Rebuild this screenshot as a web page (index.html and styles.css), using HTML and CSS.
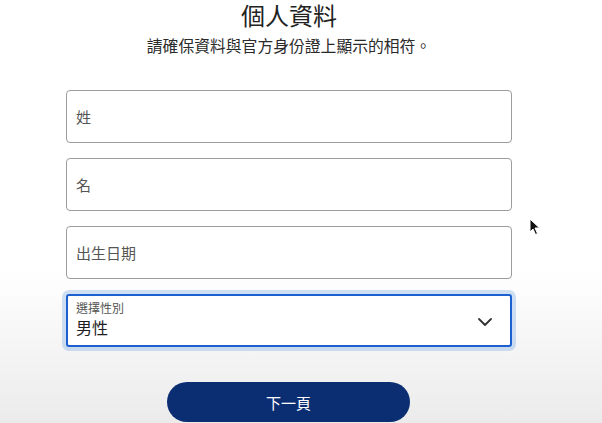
FILE: index.html
```html
<!DOCTYPE html>
<html lang="zh-Hant">
<head>
<meta charset="utf-8">
<title>個人資料</title>
<link rel="stylesheet" href="styles.css">
</head>
<body>
<main class="page">
  <h1 class="title">個人資料</h1>
  <p class="subtitle">請確保資料與官方身份證上顯示的相符。</p>
  <form class="form">
    <div class="field"><span class="placeholder">姓</span></div>
    <div class="field"><span class="placeholder">名</span></div>
    <div class="field"><span class="placeholder">出生日期</span></div>
    <div class="select">
      <div class="select-text">
        <span class="select-label">選擇性別</span>
        <span class="select-value">男性</span>
      </div>
      <svg class="chevron" width="14" height="8" viewBox="0 0 14 8"><path d="M1 1 L7 7 L13 1" fill="none" stroke="#333" stroke-width="1.8" stroke-linecap="round" stroke-linejoin="round"/></svg>
    </div>
    <div class="actions">
      <button type="button" class="next">下一頁</button>
    </div>
  </form>
</main>
<svg class="cursor" width="12" height="18" viewBox="0 0 12 18"><path d="M1 1 L1 14 L4 11 L6.5 16.5 L8.5 15.5 L6 10 L10.5 10 Z" fill="#111" stroke="#fff" stroke-width="1" stroke-linejoin="round"/></svg>
</body>
</html>
```

FILE: styles.css
```css
html, body {
  margin: 0;
  padding: 0;
}
body {
  width: 602px;
  height: 423px;
  overflow: hidden;
  position: relative;
  font-family: "Noto Sans CJK TC", "Noto Sans", sans-serif;
  background: linear-gradient(to bottom, #ffffff 0, #ffffff 64%, #ebebeb 100%);
  color: #222;
}
.page {
  width: 446px;
  padding-left: 66px;
  padding-top: 1px;
}
.title {
  margin: 0;
  font-size: 24px;
  line-height: 28px;
  font-weight: 400;
  text-align: center;
  color: #222;
}
.subtitle {
  margin: 6px 0 0;
  font-size: 15.8px;
  line-height: 22px;
  text-align: center;
  color: #2a2a2a;
}
.form {
  margin-top: 33px;
  display: flex;
  flex-direction: column;
  gap: 15px;
}
.field {
  height: 51px;
  border: 1px solid #9c9c9c;
  border-radius: 4px;
  background: #fff;
  display: flex;
  align-items: center;
  padding-left: 9px;
}
.placeholder {
  font-size: 15px;
  color: #555;
}
.select {
  height: 49px;
  border: 2px solid #1b5fd0;
  border-radius: 3px;
  background: #fff;
  box-shadow: 0 0 0 4px rgba(120, 170, 230, 0.35);
  display: flex;
  align-items: flex-start;
  justify-content: space-between;
  padding: 0 18px 0 8px;
}
.select-text {
  display: flex;
  flex-direction: column;
  padding-top: 4px;
}
.select-label {
  font-size: 12px;
  line-height: 16px;
  color: #555;
}
.select-value {
  margin-top: 1px;
  font-size: 16px;
  line-height: 21px;
  color: #1e1e1e;
}
.chevron {
  margin-top: 22px;
}
.actions {
  display: flex;
  justify-content: center;
  margin-top: 20px;
}
.next {
  width: 243px;
  height: 40px;
  border: none;
  border-radius: 20px;
  background: #0b2e73;
  color: #fff;
  font-family: "Noto Sans CJK TC", "Noto Sans", sans-serif;
  font-size: 15px;
  margin-left: -1px;
}
.cursor {
  position: absolute;
  left: 529px;
  top: 218px;
}
```
